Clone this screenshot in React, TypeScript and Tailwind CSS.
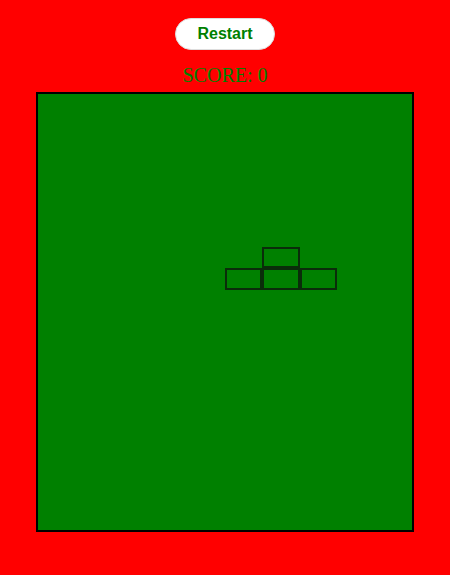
const cells: [number, number][] = [
  [6, 7],
  [5, 8],
  [6, 8],
  [7, 8],
];

export default function App() {
  return (
    <div className="min-h-[575px] w-full bg-[#ff0000] flex flex-col items-center">
      <button className="mt-[18px] w-[100px] h-[32px] rounded-full bg-white border border-[#dddddd] text-[#008000] font-bold text-[16px] font-['Liberation_Sans',Arial,sans-serif]">
        Restart
      </button>
      <div className="mt-[14px] mb-[5px] leading-[23px] text-[20px] text-[#008000] font-['Liberation_Serif','Times_New_Roman',serif]">
        SCORE: 0
      </div>
      <div className="w-[378px] h-[440px] border-2 border-black bg-[#008000] grid grid-cols-10 grid-rows-20">
        {cells.map(([c, r]) => (
          <div
            key={`${c}-${r}`}
            className="border-2 border-[#0a2d0a]"
            style={{ gridColumnStart: c + 1, gridRowStart: r + 1 }}
          />
        ))}
      </div>
    </div>
  );
}
